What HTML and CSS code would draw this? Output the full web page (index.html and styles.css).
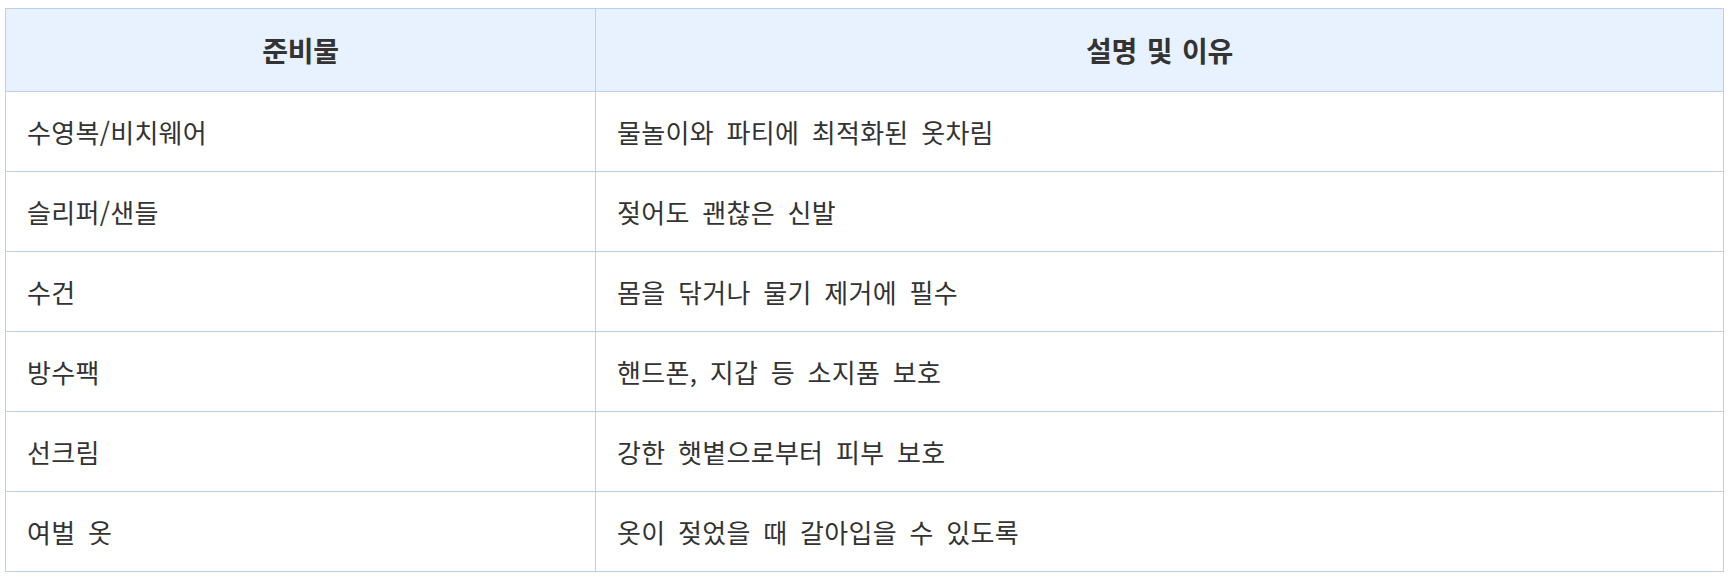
FILE: index.html
```html
<!DOCTYPE html>
<html lang="ko">
<head>
<meta charset="utf-8">
<title>준비물</title>
<link rel="stylesheet" href="styles.css">
</head>
<body>
<table class="prep-table">
  <thead>
    <tr>
      <th class="col-item">준비물</th>
      <th class="col-desc">설명 및 이유</th>
    </tr>
  </thead>
  <tbody>
    <tr><td>수영복/비치웨어</td><td>물놀이와 파티에 최적화된 옷차림</td></tr>
    <tr><td>슬리퍼/샌들</td><td>젖어도 괜찮은 신발</td></tr>
    <tr><td>수건</td><td>몸을 닦거나 물기 제거에 필수</td></tr>
    <tr><td>방수팩</td><td>핸드폰, 지갑 등 소지품 보호</td></tr>
    <tr><td>선크림</td><td>강한 햇볕으로부터 피부 보호</td></tr>
    <tr><td>여벌 옷</td><td>옷이 젖었을 때 갈아입을 수 있도록</td></tr>
  </tbody>
</table>
</body>
</html>
```
FILE: styles.css
```css
html, body {
  background: #ffffff;
}
body {
  margin: 8px 12px 0 5px;
  font-family: "Noto Sans CJK KR", "Noto Sans", sans-serif;
  color: #333333;
}
.prep-table {
  width: 100%;
  border-collapse: collapse;
  table-layout: fixed;
}
.prep-table th,
.prep-table td {
  border: 1px solid #b7d0f3;
  text-align: left;
  padding: 0 21px;
}
.prep-table th {
  background: #e8f1fe;
  font-weight: 700;
  font-size: 28px;
  letter-spacing: -0.2px;
  word-spacing: 2px;
  text-align: center;
  height: 82px;
  color: #333333;
}
.prep-table td {
  font-size: 26px;
  font-weight: 400;
  letter-spacing: 0.3px;
  word-spacing: 5px;
  height: 79px;
  color: #333333;
}
.col-item {
  width: 547px;
}
```
